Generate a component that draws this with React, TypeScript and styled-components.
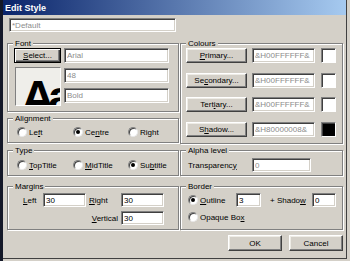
import React from 'react';
import styled, { createGlobalStyle } from 'styled-components';

const FACE = '#d4d0c8';

const Global = createGlobalStyle`
  html, body { margin: 0; padding: 0; }
  body {
    width: 350px;
    height: 261px;
    overflow: hidden;
    background: linear-gradient(to right, #141828 0 3px, ${FACE} 3px);
    font-family: "Liberation Sans", Arial, sans-serif;
    font-size: 8px;
    color: #000;
  }
`;

const Window = styled.div`
  margin-left: 3px;
  width: 344px;
  height: 259px;
  box-sizing: border-box;
  background: ${FACE};
  border-right: 1px solid #404040;
  border-bottom: 1px solid #404040;
  display: flex;
  flex-direction: column;
`;

const TitleBar = styled.div`
  flex: none;
  height: 15px;
  display: flex;
  align-items: center;
  padding-left: 2px;
  background: linear-gradient(to right, #0a246a, #a6caf0);
  color: #fff;
  font-weight: bold;
  font-size: 9px;
`;

const Content = styled.div`
  display: flex;
  flex-direction: column;
  padding: 3px 4px 0 4px;
`;

const Field = styled.input<{ $w: number; $h?: number; $muted?: boolean }>`
  box-sizing: border-box;
  width: ${(p) => p.$w}px;
  height: ${(p) => p.$h ?? 14}px;
  margin: 0;
  padding: 0 2px;
  font-family: inherit;
  font-size: 8px;
  color: ${(p) => (p.$muted ? '#8c8c8c' : '#000')};
  background: #fff;
  border: 1px solid;
  border-color: #808080 #fff #fff #808080;
  box-shadow: inset 1px 1px 0 #404040, inset -1px -1px 0 ${FACE};
  outline: none;
`;

const NameField = styled(Field)`
  margin-left: 2px;
`;

const Columns = styled.div`
  display: grid;
  grid-template-columns: 172px 163px;
  column-gap: 1px;
  margin-top: 7px;
  align-items: start;
`;

const Column = styled.div`
  display: flex;
  flex-direction: column;
`;

const Group = styled.fieldset<{ $h: number; $mt?: number }>`
  box-sizing: border-box;
  height: ${(p) => p.$h}px;
  margin: ${(p) => p.$mt ?? 0}px 0 0 0;
  padding: 0;
  min-inline-size: 0;
  border: 1px solid #808080;
  box-shadow: inset 1px 1px 0 #fff, 1px 1px 0 #fff;
`;

const GroupBody = styled.div<{ $pl: number; $pt?: number }>`
  padding: ${(p) => p.$pt ?? 0}px 0 0 ${(p) => p.$pl}px;
`;

const Legend = styled.legend`
  margin-left: 5px;
  padding: 0 2px;
  font-size: 8px;
  line-height: 9px;
  background: ${FACE};
`;

const Button = styled.button<{ $w: number; $h?: number; $default?: boolean }>`
  box-sizing: border-box;
  width: ${(p) => p.$w}px;
  height: ${(p) => p.$h ?? 15}px;
  margin: 0;
  padding: 0;
  font-family: inherit;
  font-size: 8px;
  color: #000;
  background: ${FACE};
  border: 1px solid;
  border-color: ${(p) => (p.$default ? '#000' : '#fff #404040 #404040 #fff')};
  box-shadow: ${(p) =>
    p.$default
      ? 'inset 1px 1px 0 #fff, inset -1px -1px 0 #404040, inset -2px -2px 0 #808080'
      : 'inset -1px -1px 0 #808080, inset 1px 1px 0 #eeece6'};
  cursor: default;
`;

const U = styled.span`
  text-decoration: underline;
`;

const FontRow = styled.div`
  display: flex;
  gap: 3px;
`;

const FontBottom = styled.div`
  display: flex;
  gap: 3px;
  margin-top: 4px;
`;

const Preview = styled.div`
  box-sizing: border-box;
  width: 46px;
  height: 39px;
  margin-left: 1px;
  overflow: hidden;
  background: #efeeea;
  border: 1px solid;
  border-color: #808080 #fff #fff #808080;
  padding: 5px 0 0 5px;
  font-family: "Liberation Sans", Arial, sans-serif;
  font-weight: bold;
  font-size: 47px;
  line-height: 47px;
  letter-spacing: -7px;
  white-space: nowrap;
`;

const FieldStack = styled.div`
  display: flex;
  flex-direction: column;
  gap: 5px;
  margin-top: 1px;
`;

const RadioRow = styled.div`
  display: grid;
  grid-template-columns: 56px 55px auto;
  align-items: center;
`;

const RadioLabel = styled.label`
  display: flex;
  align-items: center;
  gap: 2px;
  height: 14px;
  white-space: nowrap;
`;

const RadioCircle = styled.span<{ $on?: boolean }>`
  position: relative;
  box-sizing: border-box;
  width: 10px;
  height: 10px;
  border-radius: 50%;
  background: #fff;
  border: 1px solid;
  border-color: #808080 #e8e8e8 #e8e8e8 #808080;
  box-shadow: inset 1px 1px 0 #404040;
  flex: none;
  &::after {
    content: '';
    display: ${(p) => (p.$on ? 'block' : 'none')};
    position: absolute;
    left: 2px;
    top: 2px;
    width: 4px;
    height: 4px;
    border-radius: 50%;
    background: #000;
  }
`;

const Radio: React.FC<{ on?: boolean; children: React.ReactNode }> = ({ on, children }) => (
  <RadioLabel>
    <RadioCircle $on={on} />
    <span>{children}</span>
  </RadioLabel>
);

const MarginGrid = styled.div`
  display: grid;
  grid-template-columns: 17px 43px 29px 43px;
  grid-auto-rows: 14px;
  column-gap: 3px;
  row-gap: 4px;
  align-items: center;
`;

const Cell = styled.span<{ $col?: number; $right?: boolean }>`
  grid-column: ${(p) => p.$col ?? 'auto'};
  text-align: ${(p) => (p.$right ? 'right' : 'left')};
  white-space: nowrap;
`;

const ColourGrid = styled.div`
  display: grid;
  grid-template-columns: 61px 63px 15px;
  grid-auto-rows: 15px;
  column-gap: 5px;
  row-gap: 9.5px;
`;

const Swatch = styled.div<{ $c: string }>`
  box-sizing: border-box;
  width: 15px;
  height: 15px;
  background: ${(p) => p.$c};
  border: 1px solid;
  border-color: #808080 #fff #fff #808080;
  box-shadow: inset 1px 1px 0 #404040;
  margin-left: 1px;
`;

const AlphaRow = styled.div`
  display: grid;
  grid-template-columns: 64px 59px;
  align-items: center;
`;

const BorderGrid = styled.div`
  display: grid;
  grid-template-columns: 48px 25px 51px 24px;
  grid-auto-rows: 14px;
  row-gap: 3px;
  align-items: center;
`;

const ShadowLabel = styled.span`
  padding-left: 9px;
  white-space: nowrap;
`;

const ButtonBar = styled.div`
  display: flex;
  justify-content: flex-end;
  gap: 7px;
  margin-top: 5px;
  width: 336px;
`;

export default function App() {
  const colours: [React.ReactNode, string, string][] = [
    [<><U>P</U>rimary...</>, '&H00FFFFFF&', '#fff'],
    [<>Se<U>c</U>ondary...</>, '&H00FFFFFF&', '#fff'],
    [<>Tert<U>i</U>ary...</>, '&H00FFFFFF&', '#fff'],
    [<>S<U>h</U>adow...</>, '&H80000008&', '#000'],
  ];
  return (
    <>
      <Global />
      <Window>
        <TitleBar>Edit Style</TitleBar>
        <Content>
          <NameField $w={167} $muted readOnly value="*Default" />
          <Columns>
            <Column>
              <Group $h={73}>
                <Legend>Font</Legend>
                <GroupBody $pl={6}>
                  <FontRow>
                    <Button $w={47} $default>
                      <U>S</U>elect...
                    </Button>
                    <Field $w={105} $h={15} $muted readOnly value="Arial" />
                  </FontRow>
                  <FontBottom>
                    <Preview>Aa</Preview>
                    <FieldStack>
                      <Field $w={105} $h={15} $muted readOnly value="48" />
                      <Field $w={105} $h={15} $muted readOnly value="Bold" />
                    </FieldStack>
                  </FontBottom>
                </GroupBody>
              </Group>
              <Group $h={29} $mt={2}>
                <Legend>Alignment</Legend>
                <GroupBody $pl={9} $pt={2}>
                  <RadioRow>
                    <Radio>Le<U>f</U>t</Radio>
                    <Radio on>Ce<U>n</U>tre</Radio>
                    <Radio>Ri<U>g</U>ht</Radio>
                  </RadioRow>
                </GroupBody>
              </Group>
              <Group $h={30} $mt={3}>
                <Legend>Type</Legend>
                <GroupBody $pl={9} $pt={3}>
                  <RadioRow>
                    <Radio><U>T</U>opTitle</Radio>
                    <Radio><U>M</U>idTitle</Radio>
                    <Radio on>Su<U>b</U>title</Radio>
                  </RadioRow>
                </GroupBody>
              </Group>
              <Group $h={48} $mt={6}>
                <Legend>Margins</Legend>
                <GroupBody $pl={15} $pt={2}>
                  <MarginGrid>
                    <Cell><U>L</U>eft</Cell>
                    <Field $w={43} readOnly value="30" />
                    <Cell><U>R</U>ight</Cell>
                    <Field $w={43} readOnly value="30" />
                    <Cell $col={3} $right><U>V</U>ertical</Cell>
                    <Field $w={43} readOnly value="30" />
                  </MarginGrid>
                </GroupBody>
              </Group>
            </Column>
            <Column>
              <Group $h={105}>
                <Legend>Colours</Legend>
                <GroupBody $pl={5}>
                  <ColourGrid>
                    {colours.map(([label, code, c], i) => (
                      <React.Fragment key={i}>
                        <Button $w={61}>{label}</Button>
                        <Field $w={63} $h={15} $muted readOnly value={code} />
                        <Swatch $c={c} />
                      </React.Fragment>
                    ))}
                  </ColourGrid>
                </GroupBody>
              </Group>
              <Group $h={30} $mt={2}>
                <Legend>Alpha level</Legend>
                <GroupBody $pl={7} $pt={3}>
                  <AlphaRow>
                    <span>Transparenc<U>y</U></span>
                    <Field $w={59} $muted readOnly value="0" />
                  </AlphaRow>
                </GroupBody>
              </Group>
              <Group $h={48} $mt={6}>
                <Legend>Border</Legend>
                <GroupBody $pl={7} $pt={2}>
                  <BorderGrid>
                    <Radio on><U>O</U>utline</Radio>
                    <Field $w={25} readOnly value="3" />
                    <ShadowLabel>+ Shado<U>w</U></ShadowLabel>
                    <Field $w={24} readOnly value="0" />
                    <Radio>Opaque Bo<U>x</U></Radio>
                  </BorderGrid>
                </GroupBody>
              </Group>
            </Column>
          </Columns>
          <ButtonBar>
            <Button $w={54} $h={16}>OK</Button>
            <Button $w={54} $h={16}>Cancel</Button>
          </ButtonBar>
        </Content>
      </Window>
    </>
  );
}
